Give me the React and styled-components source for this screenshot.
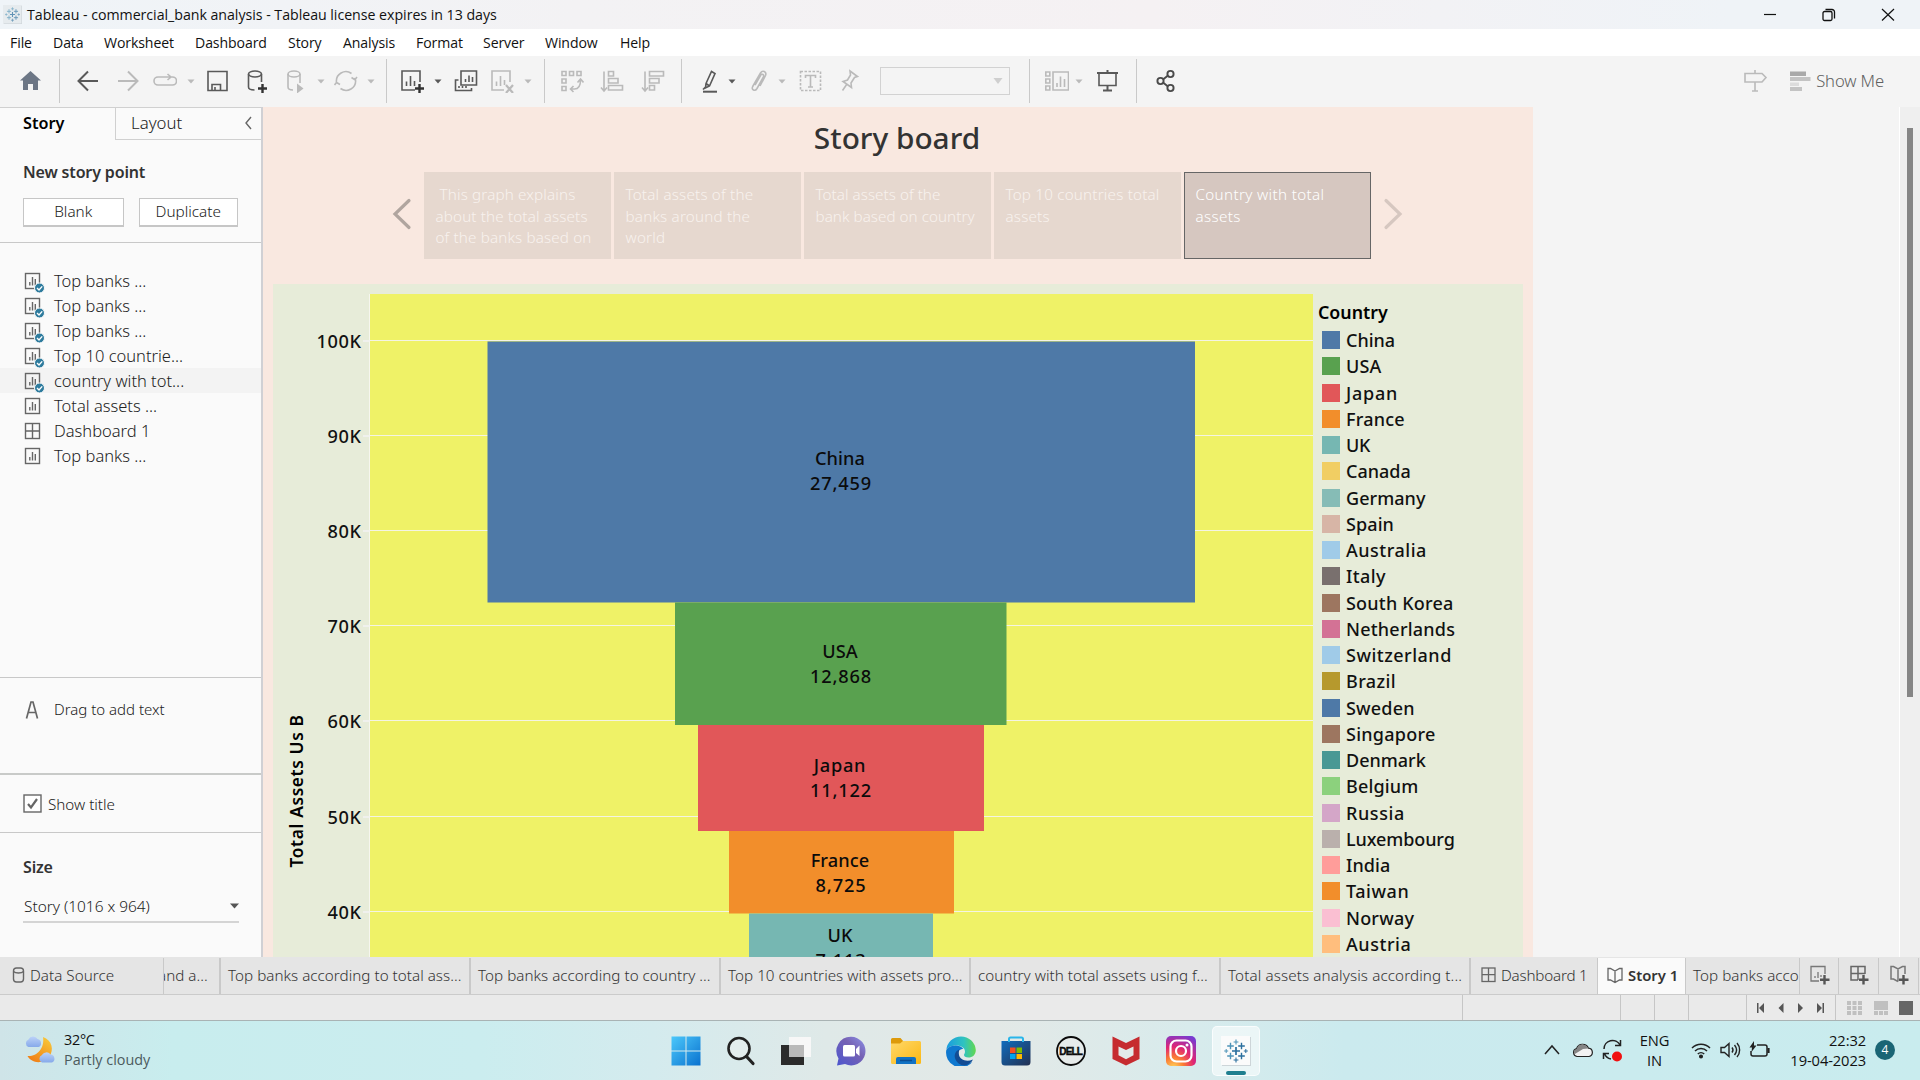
import React from "react";
import styled, { createGlobalStyle, css } from "styled-components";

const ui = `"Noto Sans", "Open Sans", sans-serif`;
const win = `"Open Sans", "Noto Sans", sans-serif`;

const Global = createGlobalStyle`
  * { box-sizing: border-box; }
  body { margin: 0; background: #f4f4f4; overflow: hidden; }
`;

const Screen = styled.div`
  width: 1920px;
  height: 1080px;
  display: flex;
  flex-direction: column;
  overflow: hidden;
  background: #f4f4f4;
  font-family: ${ui};
  color: #333;
  white-space: nowrap;
`;

const TitleBar = styled.header`
  height: 29px;
  flex: none;
  display: flex;
  align-items: center;
  padding: 0 25px 0 3px;
  background: linear-gradient(90deg, #eff4f8 0%, #f3f2f4 30%, #f5f1f3 60%, #eff3f7 90%);
  font: 400 14.2px/29px ${win};
  letter-spacing: -0.03px;
  color: #111;
`;
const AppTitle = styled.span`
  margin-left: 5px;
  flex: 1;
`;
const WindowButtons = styled.div`
  display: flex;
  gap: 39px;
  margin-right: -3px;
`;

const MenuBar = styled.nav`
  height: 27px;
  flex: none;
  display: flex;
  padding-left: 10px;
  background: #fff;
  font: 400 14.1px/27px ${win};
  letter-spacing: -0.1px;
  color: #111;
`;
const MenuItem = styled.span`
  width: ${(p) => p.$w}px;
`;

const Toolbar = styled.div`
  height: 51px;
  flex: none;
  display: flex;
  align-items: center;
  padding-bottom: 1px;
  background: #f4f4f4;
`;
const Tool = styled.span`
  flex: none;
  display: block;
  width: ${(p) => p.$w || 24}px;
  height: 24px;
  margin-left: ${(p) => p.$gap}px;
  svg { display: block; }
`;
const Divider = styled.i`
  flex: none;
  width: 1px;
  height: 44px;
  margin-left: ${(p) => p.$gap}px;
  background: #c9c9c9;
`;
const FitBox = styled.div`
  flex: none;
  width: 130px;
  height: 28px;
  margin-left: 18px;
  border: 1px solid #d2d2d2;
  display: flex;
  align-items: center;
  justify-content: flex-end;
  padding-right: 6px;
`;
const ShowMe = styled.div`
  margin-left: auto;
  display: flex;
  align-items: center;
  padding: 0 36px 1px 0;
  font-size: 16.6px;
  font-weight: 300;
  letter-spacing: -0.1px;
  color: #606060;
`;

const Main = styled.main`
  height: 850px;
  flex: none;
  display: flex;
`;

const Side = styled.aside`
  width: 263px;
  flex: none;
  display: flex;
  flex-direction: column;
  background: #fafafa;
  border-right: 2px solid #d0d0d4;
  font-size: 15px;
`;
const SideTabs = styled.div`
  height: 33px;
  flex: none;
  display: flex;
  border-top: 1px solid #d0d0d0;
`;
const SideTab = styled.div`
  width: ${(p) => p.$w}px;
  line-height: 30px;
  ${(p) =>
    p.$active
      ? css`
          padding-left: 23px;
          font-size: 16.2px;
          font-weight: 600;
          color: #000;
        `
      : css`
          padding: 0 9px 2px 15px;
          font-size: 16.8px;
          font-weight: 300;
          color: #222;
          border-left: 1px solid #d0d0d0;
          border-bottom: 1px solid #d0d0d0;
          display: flex;
          align-items: center;
          justify-content: space-between;
        `}
`;
const NewPoint = styled.section`
  height: 103px;
  flex: none;
  padding: 22px 23px 0;
  border-bottom: 1px solid #c8c8c8;
`;
const SideHeading = styled.h3`
  margin: 0;
  font-size: 16px;
  font-weight: 600;
  line-height: 20px;
  letter-spacing: -0.15px;
`;
const Buttons = styled.div`
  display: flex;
  gap: 15px;
  margin-top: 16px;
`;
const Button = styled.button`
  width: ${(p) => p.$w}px;
  height: 29px;
  padding: 0 0 2px;
  border: 1px solid #c6c6c6;
  border-bottom-width: 2px;
  background: #fff;
  font: 300 15.3px/24px ${ui};
  color: #222;
`;
const SheetList = styled.ul`
  margin: 0;
  padding: 25px 0 0;
  height: 435px;
  flex: none;
  list-style: none;
  border-bottom: 1px solid #c8c8c8;
`;
const SheetRow = styled.li`
  height: 25px;
  display: flex;
  align-items: center;
  padding: 0 0 0 24px;
  gap: 8px;
  font-size: 16.5px;
  font-weight: 300;
  line-height: 25px;
  color: #222;
  background: ${(p) => (p.$on ? "#f3f3f3" : "transparent")};
`;
const DragText = styled.section`
  height: 97px;
  flex: none;
  display: flex;
  align-items: flex-start;
  padding: 22px 0 0 25px;
  gap: 15px;
  font-size: 15px;
  font-weight: 300;
  line-height: 18px;
  color: #222;
  border-bottom: 2px solid #c8cac8;
`;
const TitleToggle = styled.section`
  height: 58px;
  flex: none;
  display: flex;
  align-items: center;
  gap: 6px;
  padding-left: 23px;
  border-bottom: 1px solid #c8c8c8;
  font-size: 15.2px;
  font-weight: 300;
  color: #222;
`;
const SizeBox = styled.section`
  flex: 1;
  padding: 24px 22px 0 23px;
`;
const SizeSelect = styled.div`
  display: flex;
  justify-content: space-between;
  align-items: center;
  height: 30px;
  margin-top: 16px;
  padding: 0 0 2px 1px;
  font-size: 15.4px;
  font-weight: 300;
  color: #222;
  border-bottom: 2px solid #d4d4d4;
`;

const StoryArea = styled.section`
  width: 1270px;
  flex: none;
  background: #f9e8e0;
  overflow: hidden;
`;
const StoryTitle = styled.h1`
  margin: 0;
  padding: 12px 2px 0 0;
  height: 65px;
  text-align: center;
  font-size: 29.8px;
  line-height: 38px;
  font-weight: 500;
  color: #333;
`;
const Navigator = styled.div`
  display: flex;
  align-items: center;
  justify-content: center;
  height: 87px;
  padding-right: 2px;
  > svg { margin-bottom: 3px; }
`;
const Points = styled.div`
  display: flex;
  gap: 3px;
  margin: 0 12px;
`;
const Point = styled.div`
  width: 187px;
  height: 87px;
  background: ${(p) => (p.$on ? "#d6c7c0" : "#e6d8cf")};
  border: ${(p) => (p.$on ? "1px solid #666" : "0")};
  padding: ${(p) => (p.$on ? "11px 0 0 11px" : "12px 0 0 12px")};
  font-size: 15.2px;
  font-weight: 300;
  letter-spacing: ${(p) => p.$ls ?? 0}px;
  line-height: 21.5px;
  white-space: pre;
  color: ${(p) => (p.$on ? "#fff" : "#f8f2ee")};
`;
const Board = styled.div`
  display: flex;
  width: 1250px;
  height: 673px;
  margin: 25px 0 0 10px;
  background: #e7ecd9;
`;
const Legend = styled.div`
  padding: 17px 0 0 5px;
  font-size: 18px;
  font-weight: 500;
  color: #111;
`;
const LegendTitle = styled.div`
  height: 26px;
  font-size: 17.8px;
  line-height: 22px;
  font-weight: 600;
  color: #000;
`;
const LegendRow = styled.div`
  height: 26.26px;
  display: flex;
  align-items: center;
  gap: 6px;
  padding-left: 4px;
  letter-spacing: ${(p) => p.$ls ?? 0}px;
`;
const Swatch = styled.i`
  width: 18px;
  height: 18px;
  background: ${(p) => p.$c};
`;
const Canvas = styled.div`
  flex: 1;
  display: flex;
  justify-content: flex-end;
`;
const ScrollTrack = styled.div`
  width: 21px;
  background: #efefef;
  border-left: 1px solid #fff;
  padding: 21px 0 0 7px;
`;
const ScrollThumb = styled.div`
  width: 6px;
  height: 569px;
  background: #868686;
`;

const SheetTabs = styled.div`
  height: 38px;
  flex: none;
  display: flex;
  padding-top: 1px;
  background: #e5e5e5;
  border-bottom: 1px solid #cbcbcb;
  color: #333;
`;
const SheetTab = styled.div`
  width: ${(p) => p.$w}px;
  flex: none;
  height: 36px;
  overflow: hidden;
  display: flex;
  align-items: center;
  gap: 5px;
  padding: 0 0 2px ${(p) => p.$pl ?? 7}px;
  border-right: ${(p) => p.$br ?? 2}px solid #c9c9c9;
  font-size: 15.2px;
  font-weight: 300;
  letter-spacing: ${(p) => p.$ls ?? 0.03}px;
  text-indent: ${(p) => p.$indent ?? 0}px;
  ${(p) =>
    p.$on &&
    css`
      background: #fafafa;
      font-size: 14.8px;
      font-weight: 600;
      color: #333;
    `}
  svg { flex: none; }
`;
const StatusBar = styled.div`
  height: 26px;
  flex: none;
  display: flex;
  background: #eaeaea;
  border-bottom: 1px solid #a9b3b4;
`;
const StatusCell = styled.div`
  width: ${(p) => p.$w}px;
  flex: none;
  display: flex;
  align-items: center;
  justify-content: space-between;
  padding: 0 ${(p) => p.$pr ?? 0}px 0 ${(p) => p.$pl ?? 0}px;
  border-right: 1px solid #c6c6c6;
  &:last-child { border-right: 0; }
`;

const Taskbar = styled.footer`
  height: 59px;
  flex: none;
  display: flex;
  align-items: center;
  background: linear-gradient(90deg, #cfe4e8 0%, #c8edee 9%, #cbedef 25%, #d4ebee 34%, #dfe9e8 43%, #e3e9e7 52%, #d8ebec 62%, #cbeaee 70%, #c9ecee 100%);
  font-family: ${win};
`;
const Weather = styled.div`
  width: 662px;
  flex: none;
  display: flex;
  align-items: center;
  gap: 8px;
  padding: 0 0 2px 24px;
  font-size: 14.4px;
  line-height: 20px;
  letter-spacing: -0.25px;
  color: #111;
  small { display: block; font-size: 14.4px; letter-spacing: 0; color: #4c5b5e; }
`;
const Dock = styled.div`
  display: flex;
  gap: 7px;
`;
const DockItem = styled.div`
  width: 48px;
  height: 50px;
  display: flex;
  flex-direction: column;
  align-items: center;
  justify-content: center;
  border-radius: 5px;
  background: ${(p) => (p.$on ? "rgba(255,255,255,.55)" : "transparent")};
  border: 1px solid ${(p) => (p.$on ? "rgba(255,255,255,.7)" : "transparent")};
`;
const RunMark = styled.i`
  width: 20px;
  height: 4px;
  margin: 5px 0 -9px;
  border-radius: 2px;
  background: #1f7f8f;
`;
const Tray = styled.div`
  margin-left: auto;
  display: flex;
  align-items: center;
  padding: 0 25px 2px 0;
  font-size: 14.7px;
  line-height: 20px;
  letter-spacing: -0.1px;
  color: #111;
`;
const TrayItem = styled.div`
  margin-left: ${(p) => p.$gap}px;
  text-align: ${(p) => p.$align || "center"};
  svg { display: block; }
`;
const Badge = styled.span`
  width: 20px;
  height: 20px;
  margin-left: 9px;
  border-radius: 50%;
  background: #1a6575;
  color: #fff;
  font-size: 12px;
  text-align: center;
`;

const Svg = ({ w = 24, h = 24, vb, c = "#555", sw = 1.6, children }) => (
  <svg width={w} height={h} viewBox={vb || `0 0 ${w} ${h}`} fill="none" stroke={c} strokeWidth={sw}>
    {children}
  </svg>
);
const GREY = "#bababa";
const DARK = "#595959";

const Caret = ({ gap, c = GREY }) => (
  <Tool $gap={gap} $w={8}>
    <Svg w={8} c="none"><path d="M0.5 10.5h7L4 14.5z" fill={c} /></Svg>
  </Tool>
);
const T = ({ gap, c = DARK, sw, children }) => (
  <Tool $gap={gap}><Svg c={c} sw={sw}>{children}</Svg></Tool>
);

const TABLEAU = [
  [12, 12, 4, 1.7], [12, 3, 2.4, 1.1], [12, 21, 2.4, 1.1], [6.5, 7, 3.3, 1.4], [17.5, 7, 3.3, 1.4],
  [6.5, 17, 3.3, 1.4], [17.5, 17, 3.3, 1.4], [2.2, 12, 2, 1], [21.8, 12, 2, 1],
];
const Tableau = ({ size, box, soft }) => (
  <svg width={size} height={size} viewBox="-3 -3 30 30">
    <rect x="-2" y="-2" width="29" height="29" fill="#b9c0c4" opacity=".6" />
    <rect x="-3" y="-3" width="29" height="29" fill={box} />
    <g opacity={soft ? 0.7 : 1}>
      {TABLEAU.map(([x, y, r, w], i) => (
        <path key={i} d={`M${x - r} ${y}h${2 * r}M${x} ${y - r}v${2 * r}`} stroke={i % 2 ? "#4f94b8" : "#2b6f9e"} strokeWidth={w} />
      ))}
    </g>
  </svg>
);

const SheetIcon = ({ checked, dash }) => (
  <Svg w={22} h={24} c="#666" sw={1.4}>
    <rect x="1.5" y="4.500" width="14" height="15" />
    {dash ? <path d="M8.5 4.5v15M1.5 12h14" /> : <path d="M5.8 16.500v-3.5M8.5 16.500V8M11.3 16.500V10" />}
    {checked && (
      <g>
        <circle cx="15.5" cy="19" r="5" fill="#2f7c9e" stroke="#fafafa" strokeWidth="1" />
        <path d="M13 19l2 2 3.2-3.6" stroke="#fff" />
      </g>
    )}
  </Svg>
);

const SHEETS = [
  ["Top banks ...", "c"], ["Top banks ...", "c"], ["Top banks ...", "c"], ["Top 10 countrie...", "c"],
  ["country with tot...", "c"], ["Total assets ...", ""], ["Dashboard 1", "d"], ["Top banks ...", ""],
];

const POINTS = [
  [" This graph explains\nabout the total assets\nof the banks based on", 0.15],
  ["Total assets of the\nbanks around the\nworld", 0.2],
  ["Total assets of the\nbank based on country", 0.05],
  ["Top 10 countries total\nassets", 0.2],
  ["Country with total\nassets", 0.35],
];

const LEGEND = [
  ["China", "#4e79a7", 0], ["USA", "#59a14f", 0.2], ["Japan", "#e15759", 0.75], ["France", "#f28e2b", 0.2], ["UK", "#76b7b2", -0.2],
  ["Canada", "#f1ce63", 0], ["Germany", "#86bcb6", 0.05], ["Spain", "#d7b5a6", 0.1], ["Australia", "#a0cbe8", 0.5], ["Italy", "#79706e", 0.4],
  ["South Korea", "#9d7660", 0.2], ["Netherlands", "#d37295", 0.22], ["Switzerland", "#a0cbe8", 0.5], ["Brazil", "#b6992d", 0.4],
  ["Sweden", "#4e79a7", 0.2], ["Singapore", "#9d7660", 0.25], ["Denmark", "#499894", 0], ["Belgium", "#8cd17d", 0.15], ["Russia", "#d4a6c8", 0.6],
  ["Luxembourg", "#bab0ac", -0.1], ["India", "#ff9d9a", 0.1], ["Taiwan", "#f28e2b", 0.55], ["Norway", "#fabfd2", 0.2], ["Austria", "#ffbe7d", 0.55],
];

const BARS = [
  ["China", "27,459", 487.5, 1195, 341.5, 602.5, "#4e79a7", 459],
  ["USA", "12,868", 675, 1006.5, 602.5, 725, "#59a14f", 652],
  ["Japan", "11,122", 698, 984, 725, 831, "#e15759", 766],
  ["France", "8,725", 729, 954, 831, 913.5, "#f28e2b", 861],
  ["UK", "7,113", 749, 933, 913.5, 960, "#76b7b2", 936],
];

const Axis = styled.text`
  font: 500 18.2px ${ui};
  letter-spacing: 0.6px;
  fill: #111;
  text-anchor: end;
`;
const Mark = styled.text`
  font: 500 18.2px ${ui};
  letter-spacing: ${(p) => p.$ls}px;
  fill: #0b0b0b;
  text-anchor: middle;
`;
const AxisTitle = styled.text`
  font: 600 17.4px ${ui};
  letter-spacing: 0.6px;
  fill: #000;
  text-anchor: middle;
`;

const Chart = () => (
  <svg width="1040" height="673" viewBox="273 284 1040 673">
    <rect x="370" y="294" width="943" height="663" fill="#eff267" />
    <path d="M369.5 294V957" stroke="#f6f6ee" />
    {[340.5, 435.5, 530.5, 625.5, 720.5, 816.5, 911.5].map((y, i) => (
      <g key={y}>
        <path d={`M363 ${y + 0.5}H370`} stroke="#f3f3f3" strokeWidth="1.6" />
        <path d={`M370 ${y}H1313`} stroke="#f4f4e4" strokeWidth="1.2" />
        <Axis x="361.500" y={y + 7.5}>{100 - i * 10}K</Axis>
      </g>
    ))}
    {BARS.map(([n, v, x1, x2, y1, y2, c, ty]) => (
      <g key={n}>
        <rect x={x1} y={y1} width={x2 - x1} height={y2 - y1} fill={c} />
        <Mark x="840" y={ty + 6} $ls={n === "Japan" ? 0.7 : 0.1}>{n}</Mark>
        <Mark x="841" y={ty + 31} $ls={0.85}>{v}</Mark>
      </g>
    ))}
    <AxisTitle transform="translate(303 791) rotate(-90)">Total Assets Us B</AxisTitle>
  </svg>
);

const TabDash = () => (
  <Svg w={15} h={18} c="#666" sw={1.3}><rect x="1" y="2" width="13" height="13.5" /><path d="M7.5 2v13.5M1 8.7h13" /></Svg>
);
const TabStory = () => (
  <Svg w={16} h={18} c="#666" sw={1.3}><path d="M1 2.500h2.500l4.500 2.500 4.500-2.500H15v11.500h-2.500L8 16.500 3.500 14H1zM8 5v11.500" /></Svg>
);
const Plus = () => <path d="M17.5 12v9.500M13 16.700h9.500" stroke="#555" strokeWidth="2.4" />;

const DockIcons = [
  <svg width="30" height="30" viewBox="0 0 30 30"><defs><linearGradient id="wn" x1="0" y1="0" x2="1" y2="1"><stop offset="0" stopColor="#4cc8fb" /><stop offset="1" stopColor="#0a72cf" /></linearGradient></defs><path d="M.5 .5h14v14h-14zM15.500 .5h14v14h-14zM.5 15.500h14v14h-14zM15.500 15.500h14v14h-14z" fill="url(#wn)" /></svg>,
  <svg width="30" height="30" viewBox="0 0 30 30" fill="none" stroke="#222"><circle cx="13" cy="12.500" r="10.500" strokeWidth="2.600" fill="#e9eeee" fillOpacity=".6" /><path d="M20.500 20.500l6.500 7" strokeWidth="3.200" strokeLinecap="round" /></svg>,
  <svg width="30" height="30" viewBox="0 0 30 30"><rect x="0" y="9" width="23" height="20" fill="#2b2b2b" /><rect x="8" y="1" width="22" height="20" fill="#f7f7f7" /><rect x="8" y="9" width="15" height="12" fill="#b9b9b9" /></svg>,
  <svg width="30" height="30" viewBox="0 0 30 30"><defs><linearGradient id="ct" x1="1" y1="0" x2="0" y2="1"><stop offset="0" stopColor="#8d93ea" /><stop offset=".4" stopColor="#7662b4" /><stop offset="1" stopColor="#4b55cf" /></linearGradient></defs><path d="M15 .8a14.300 14.300 0 1 1-6 27.200L1 29.500l1.500-7A14.300 14.300 0 0 1 15 .8z" fill="url(#ct)" /><rect x="7" y="9" width="12" height="11.500" rx="1.500" fill="#fff" /><path d="M20 13l3.500-3.500v10.500L20 17z" fill="#fff" /></svg>,
  <svg width="30" height="30" viewBox="0 0 30 30"><defs><linearGradient id="fo" x1="0" y1="0" x2="1" y2="1"><stop offset="0" stopColor="#ffd86a" /><stop offset="1" stopColor="#fbb813" /></linearGradient></defs><path d="M0 3.500a1.500 1.500 0 0 1 1.500-1.500h8l3 3.500H12v5H0z" fill="#dd9a0b" /><path d="M0 7.500h9l3-2.500h16.500A1.500 1.500 0 0 1 30 6.500v20a1.500 1.500 0 0 1-1.500 1.500h-27A1.500 1.500 0 0 1 0 26.500z" fill="url(#fo)" /><path d="M5 28V23a2 2 0 0 1 2-2h16a2 2 0 0 1 2 2v5z" fill="#1172c4" /><path d="M9 24.500h12" stroke="#0b4d92" strokeWidth="1.500" /></svg>,
  <svg width="30" height="30" viewBox="0 0 30 30"><defs><linearGradient id="ed" x1="0" y1=".3" x2="1" y2=".3"><stop offset="0" stopColor="#1a9be0" /><stop offset=".6" stopColor="#2fc3c0" /><stop offset="1" stopColor="#62d84e" /></linearGradient></defs><path d="M.3 14A14.800 14.800 0 0 1 29.800 14c0 5-3.500 7.500-7.300 7.500-3 0-4.500-1.200-4.500-2.500 0-1 1-1.500 1-3.500C19 12 15 9.500 10.500 9.500 5.500 9.500 1.500 11.500.3 14z" fill="url(#ed)" /><path d="M.3 14c1.500-3 5-4.500 9.500-4.500 3.500 0 6 1.500 7.500 3.500-4 0-7 3-6 8 .8 4 5 6.500 9.500 6.500 2.500 0 4-.6 5.500-1.500A14.800 14.800 0 0 1 .3 14z" fill="#0f78cf" /><path d="M13.500 13.500c-3.500 1-5.500 4.500-4.500 8.500 1 4.500 5.500 7.500 9.500 7.500 3.500-.5 7-3 8.500-6-7 3-13 0-14-4.500-.5-2.500 0-4.500.5-5.500z" fill="#124c94" /></svg>,
  <svg width="30" height="30" viewBox="0 0 30 30"><defs><linearGradient id="st" x1="0" y1="0" x2="1" y2="1"><stop offset="0" stopColor="#0f6cbd" /><stop offset="1" stopColor="#243152" /></linearGradient></defs><path d="M.5 5h29v21a3.500 3.500 0 0 1-3.500 3.500H4A3.500 3.500 0 0 1 .5 26z" fill="url(#st)" /><path d="M8 6V3a1.500 1.500 0 0 1 1.500-1.500h11A1.500 1.500 0 0 1 22 3v3" fill="none" stroke="#29b6ea" strokeWidth="2" /><path d="M9 11.500h5.500V17H9z" fill="#f25022" /><path d="M15.500 11.500H21V17h-5.500z" fill="#7fba00" /><path d="M9 18h5.500v5H9z" fill="#00a4ef" /><path d="M15.500 18H21v5h-5.500z" fill="#ffb900" /></svg>,
  <svg width="30" height="30" viewBox="0 0 30 30"><circle cx="15" cy="15" r="14" fill="#e6ebea" stroke="#0a0a0a" strokeWidth="1.800" /><text x="14.600" y="18.600" textAnchor="middle" fontFamily="Liberation Sans, sans-serif" fontSize="10" fontWeight="700" letterSpacing="-.9" stroke="#0a0a0a" strokeWidth=".4" fill="#0a0a0a">DELL</text></svg>,
  <svg width="30" height="30" viewBox="0 0 30 30"><path d="M1.500 0.500l13.500 6.500 13.500-6.500v22.500L15 29.500 1.500 23z" fill="#c62b2f" /><path d="M7.500 10.500v8.700l7.500 4 7.500-4v-8.700L15 14z" fill="#e3e9e8" /></svg>,
  <svg width="30" height="30" viewBox="0 0 30 30"><defs><radialGradient id="ig" cx=".25" cy="1.050" r="1.150"><stop offset="0" stopColor="#ffd35a" /><stop offset=".3" stopColor="#fb7b34" /><stop offset=".6" stopColor="#e02574" /><stop offset="1" stopColor="#7a3ad0" /></radialGradient></defs><rect width="30" height="30" rx="5" fill="url(#ig)" /><g fill="none" stroke="#fff" strokeWidth="2.200"><rect x="4.500" y="4.500" width="21" height="21" rx="6" /><circle cx="15" cy="15" r="5" /></g><circle cx="21" cy="9" r="1.500" fill="#fff" /></svg>,
];

export default function App() {
  return (
    <Screen>
      <Global />
      <TitleBar>
        <Tableau size={19} box="#e6ebee" soft />
        <AppTitle>Tableau - commercial_bank analysis - Tableau license expires in 13 days</AppTitle>
        <WindowButtons>
          <Svg w={20} h={20} c="#111" sw={1.2}><path d="M4 9.500h12" /></Svg>
          <Svg w={20} h={20} c="#111" sw={1.3}><rect x="4" y="6.500" width="9" height="9" rx="1.500" /><path d="M6.500 4.500h6.500a2.500 2.500 0 0 1 2.500 2.500v6.500" /></Svg>
          <Svg w={20} h={20} c="#111" sw={1.2}><path d="M4 4l12 11.500M16 4L4 15.500" /></Svg>
        </WindowButtons>
      </TitleBar>

      <MenuBar>
        {[["File", 43], ["Data", 51], ["Worksheet", 91], ["Dashboard", 93], ["Story", 55], ["Analysis", 73], ["Format", 67], ["Server", 62], ["Window", 75], ["Help", 50]].map(([n, w]) => (
          <MenuItem key={n} $w={w}>{n}</MenuItem>
        ))}
      </MenuBar>

      <Toolbar>
        <T gap={18} c="none"><path d="M12.500 2L2 11.500h3V21h5v-6h5v6h5v-9.500h3z" fill="#6c7685" /></T>
        <Divider $gap={17} />
        <T gap={16} sw={2}><path d="M22 12H2.500M12 2.500L2.500 12l9.500 9.500" /></T>
        <T gap={16} c={GREY} sw={2}><path d="M2 12h19.500M12 2.500l9.500 9.500-9.500 9.500" /></T>
        <T gap={13} c={GREY}><path d="M17 8h2.500a4 4 0 0 1 0 8H5a4 4 0 0 1 0-8h12M14.500 5l3.500 3-3.500 3" /></T>
        <Caret gap={10} />
        <T gap={11}><path d="M2 2.500h19v19H2zM6 21v-5.500h8.500V21M9 21v-3" /></T>
        <T gap={15}><ellipse cx="10" cy="5" rx="6.500" ry="3" /><path d="M3.500 5v13c0 2 2 3 6 3M16.500 5v8" /><path d="M17.500 15v9M13 19.500h9" stroke="#333" strokeWidth="2.400" /></T>
        <T gap={15} c={GREY}><ellipse cx="10" cy="5" rx="6" ry="3" /><path d="M4 5v13c0 2 2 3 5 3M16 5v9" /><path d="M13 14.500l6.500 5-6.500 5z" fill={GREY} stroke="none" /></T>
        <Caret gap={9} />
        <T gap={9} c={GREY}><path d="M2.500 13.500A9.500 9.500 0 0 1 17.500 4.500M21.500 10.500A9.500 9.500 0 0 1 6.500 19.500M21 9l-.5 1.500-3-2M21 10.500l2-2.500M2.500 13.500l-2 2.500M2.500 13.500l3.500 2" /></T>
        <Caret gap={9} />
        <Divider $gap={11} />
        <T gap={13}><path d="M20 13V2H2v19h13M6.500 17v-4.500M10.500 17V7M14.500 17v-5" /><path d="M19.500 15v9M15 19.500h9" stroke="#333" strokeWidth="2.400" /></T>
        <Caret gap={10} c={DARK} />
        <T gap={12}><path d="M7 2h15.500v14H7zM11.500 13v-3M15 13V6.500M18.500 13V8M4.500 11H1.500v10.500h16V19M5 19v-2M8.500 19v-2M12 19v-2" /></T>
        <T gap={12} c={GREY}><path d="M20 13V2H2v19h12M6.500 17v-4.500M10.500 17V7M14.500 16v-5" /><path d="M16 16l7 8M23 16l-7 8" strokeWidth="2.200" /></T>
        <Caret gap={10} />
        <Divider $gap={12} />
        <T gap={15} c={GREY}><path d="M2 2.500h4v4H2zM9.500 2.500h4v4h-4zM17 2.500h4v4h-4zM2 10h4v4H2zM2 17.500h4v4H2zM10.500 20h4c4 0 6-3 6-9M17.500 13.500l3-3.500 3 3.500M13.500 17l-3 3 3 3" /></T>
        <T gap={16} c={GREY}><path d="M4 2.500v19M1 18.500l3 3.500 3-3.500M8.500 2.500h5v4.500h-5zM8.500 9.500h9.500V14H8.500zM8.500 16.500h14V21h-14z" /></T>
        <T gap={17} c={GREY}><path d="M4 2.500v19M1 18.500l3 3.500 3-3.500M8.500 2.500h14V7h-14zM8.500 9.500h9.500V14H8.500zM8.500 16.500h5V21h-5z" /></T>
        <Divider $gap={16} />
        <T gap={17}><path d="M7 14.500L12.500 2.500l3.500 2L10.500 17 6.500 19zM7 14.500l3.500 2.500M4 20.500l2.500-2.500" /><path d="M4 22.700h14" strokeWidth="2" /></T>
        <Caret gap={5} c={DARK} />
        <T gap={11} c={GREY}><path d="M8 16l5.500-9.500c1.500-2.500 4-.8 2.800 1.700L10 19.500c-2 3.300-6 1.300-4.300-2L13.500 4c2-3.300 6.500-1.500 5 2.500L13 17" /></T>
        <Caret gap={7} />
        <T gap={12} c={GREY}><rect x="2.500" y="2.500" width="20" height="19" strokeDasharray="2.500 1.500" /><path d="M7.500 9V6.500h10V9M12.500 6.500v11.500M10 18h5" /></T>
        <T gap={16} c={GREY}><path d="M12 2l7.500 5.500-3 1-3.500 5.500.5 4.500-8.500-6 4.500-1.500 3-5zM9 15L4.500 21.500" /></T>
        <FitBox><Svg w={10} h={8} c="none"><path d="M0.500 1h9L5 7z" fill="#cfcfcf" /></Svg></FitBox>
        <Divider $gap={19} />
        <T gap={15} c={GREY}><path d="M.8 3h4v4h-4zM.8 10h4v4h-4zM.8 17h4v4h-4zM8 3h15.500v18H8zM12 18v-4M15.500 18V7.500M19.500 18v-8" /></T>
        <Caret gap={6} />
        <T gap={13}><path d="M1 4h21M11.500 1v3M11.500 16.500V22M7 21.500h9" strokeWidth="2" /><path d="M3 4v12.500h17V4" /></T>
        <Divider $gap={16} />
        <T gap={17} c="#4a4a4a" sw={1.9}><circle cx="6.500" cy="12" r="3.100" /><circle cx="16.500" cy="5" r="3.100" /><circle cx="16.500" cy="19" r="3.100" /><path d="M9 10.500l5-4M9 13.500l5 4" /></T>
        <ShowMe>
          <Svg c={GREY} w={45}><path d="M2 4.500h17l4 4-4 4.500H2zM12 1v3.500M12 13v9M9 22h6" /></Svg>
          <Svg c="none" w={28}><path d="M2 2.500h16V7H2z" fill="#a9a9a9" /><path d="M2 8h20.500v4H2zM2 18h12v4H2z" fill="#c3c3c3" /><path d="M2 13.500h9V17H2z" fill="#dcdcdc" /></Svg>
          Show Me
        </ShowMe>
      </Toolbar>

      <Main>
        <Side>
          <SideTabs>
            <SideTab $w={115} $active>Story</SideTab>
            <SideTab $w={146}>
              Layout
              <Svg w={8} h={14} c="#666" sw={1.400}><path d="M7 1L2 7l5 6" /></Svg>
            </SideTab>
          </SideTabs>
          <NewPoint>
            <SideHeading>New story point</SideHeading>
            <Buttons><Button $w={101}>Blank</Button><Button $w={100}>Duplicate</Button></Buttons>
          </NewPoint>
          <SheetList>
            {SHEETS.map(([n, k], i) => (
              <SheetRow key={i} $on={i === 4}>
                <SheetIcon checked={k === "c"} dash={k === "d"} />
                <span>{n}</span>
              </SheetRow>
            ))}
          </SheetList>
          <DragText>
            <Svg w={14} h={20} c="#666" sw={1.700}><path d="M1.500 18.500L6 2h2l4.500 16.500M3 12.500h8" /></Svg>
            Drag to add text
          </DragText>
          <TitleToggle>
            <Svg w={19} h={20} c="#666" sw={1.400}><rect x="1" y="1" width="17" height="17" fill="#fff" /><path d="M5 10l3 3.500 6-8.500" strokeWidth="2.200" /></Svg>
            Show title
          </TitleToggle>
          <SizeBox>
            <SideHeading>Size</SideHeading>
            <SizeSelect>
              Story (1016 x 964)
              <Svg w={9} h={6} c="none"><path d="M0 .5h9L4.500 5.500z" fill="#555" /></Svg>
            </SizeSelect>
          </SizeBox>
        </Side>

        <StoryArea>
          <StoryTitle>Story board</StoryTitle>
          <Navigator>
            <Svg w={20} h={32} c="#b0a59f" sw={3.200}><path d="M17 2.500L3 16l14 13.500" strokeLinecap="round" /></Svg>
            <Points>
              {POINTS.map(([t, ls], i) => <Point key={i} $on={i === 4} $ls={ls}>{t}</Point>)}
            </Points>
            <Svg w={20} h={32} c="#d6c7c0" sw={3.200}><path d="M3 2.500L17 16 3 29.500" strokeLinecap="round" /></Svg>
          </Navigator>
          <Board>
            <Chart />
            <Legend>
              <LegendTitle>Country</LegendTitle>
              {LEGEND.map(([n, c, ls]) => (
                <LegendRow key={n} $ls={ls}><Swatch $c={c} />{n}</LegendRow>
              ))}
            </Legend>
          </Board>
        </StoryArea>

        <Canvas>
          <ScrollTrack><ScrollThumb /></ScrollTrack>
        </Canvas>
      </Main>

      <SheetTabs>
        <SheetTab $w={164} $pl={12} $br={1}>
          <Svg w={13} h={18} c="#666" sw={1.400}><rect x="1.500" y="2" width="10" height="14" rx="3" /><path d="M1.500 5.500c2 2 8 2 10 0" /></Svg>
          Data Source
        </SheetTab>
        <SheetTab $w={57} $pl={0} $indent={-6}>and a...</SheetTab>
        <SheetTab $w={250}>Top banks according to total ass...</SheetTab>
        <SheetTab $w={250}>Top banks according to country ...</SheetTab>
        <SheetTab $w={250}>Top 10 countries with assets pro...</SheetTab>
        <SheetTab $w={250}>country with total assets using f...</SheetTab>
        <SheetTab $w={250} $ls={0.12}>Total assets analysis according t...</SheetTab>
        <SheetTab $w={127} $pl={10} $br={1} $ls={-0.2}><TabDash />Dashboard 1</SheetTab>
        <SheetTab $w={88} $pl={9} $br={1} $on><TabStory />Story 1</SheetTab>
        <SheetTab $w={114} $br={1}>Top banks according</SheetTab>
        <SheetTab $w={39} $br={1}><Svg c="#777" sw={1.300}><path d="M18 11V3.500H4V18h8M8 15v-2M11 15V9M14 14v-2" /><Plus /></Svg></SheetTab>
        <SheetTab $w={40} $br={1}><Svg c="#666" sw={1.500}><path d="M19 11V3.500H5V17h7M12 3.500V17M5 10.500h14" /><Plus /></Svg></SheetTab>
        <SheetTab $w={40} $br={1}><Svg c="#777" sw={1.500}><path d="M19 11V3.500h-2.500L12 6 7.500 3.500H5V16h2.500l4.500 2.500M12 6v12.500" /><Plus /></Svg></SheetTab>
      </SheetTabs>

      <StatusBar>
        <StatusCell $w={1463} /><StatusCell $w={158} /><StatusCell $w={34} /><StatusCell $w={34} /><StatusCell $w={58} />
        <StatusCell $w={89} $pl={10} $pr={11}>
          <Svg w={8} h={12} c="none"><path d="M0 1h1.500v10H0zM7 1v10L2 6z" fill="#555" /></Svg>
          <Svg w={8} h={12} c="none"><path d="M6.500 1v10l-5-5z" fill="#555" /></Svg>
          <Svg w={8} h={12} c="none"><path d="M2 1v10l5-5z" fill="#555" /></Svg>
          <Svg w={8} h={12} c="none"><path d="M6.500 1H8v10H6.500zM1 1v10l5-5z" fill="#555" /></Svg>
        </StatusCell>
        <StatusCell $w={84} $pl={11} $pr={7}>
          <Svg w={15} h={14} c="none"><path d="M0 0h4v4H0zM5.500 0h4v4h-4zM11 0h4v4h-4zM0 5h4v4H0zM5.500 5h4v4h-4zM11 5h4v4h-4zM0 10h4v4H0zM5.500 10h4v4h-4zM11 10h4v4h-4z" fill="#c0c0c0" /></Svg>
          <Svg w={14} h={14} c="none"><path d="M0 0h14v9H0zM0 10h4v4H0zM5 10h4v4H5zM10 10h4v4h-4z" fill="#c0c0c0" /></Svg>
          <Svg w={14} h={14} c="none"><path d="M0 0h14v14H0z" fill="#666" /></Svg>
        </StatusCell>
      </StatusBar>

      <Taskbar>
        <Weather>
          <svg width="32" height="30" viewBox="0 0 32 30">
            <defs>
              <linearGradient id="mo" x1=".8" y1="0" x2=".2" y2="1"><stop offset="0" stopColor="#f8c83a" /><stop offset="1" stopColor="#ef7d16" /></linearGradient>
              <linearGradient id="cl" x1="0" y1="0" x2="0" y2="1"><stop offset="0" stopColor="#bcd2f8" /><stop offset="1" stopColor="#86a9ea" /></linearGradient>
            </defs>
            <path d="M19 2c9 3 11.500 13 6 20-5.500 7-17 7-21.500-1C12 22 21 14 19 2z" fill="url(#mo)" />
            <path d="M4.500 12a4 4 0 0 1 0-7.500 5 5 0 0 1 9-.5 4.200 4.200 0 0 1 1 8z" fill="url(#cl)" />
            <path d="M18 27.500a4 4 0 0 1 0-7.500 5 5 0 0 1 8.500-.5A4.200 4.200 0 0 1 28 27.500z" fill="url(#cl)" />
          </svg>
          <div>32°C<small>Partly cloudy</small></div>
        </Weather>
        <Dock>
          {DockIcons.map((ic, i) => <DockItem key={i}>{ic}</DockItem>)}
          <DockItem $on><Tableau size={30} box="#fbfbfb" /><RunMark /></DockItem>
        </Dock>
        <Tray>
          <TrayItem $gap={0}><Svg w={18} h={20} c="#222" sw={1.500}><path d="M2 14l7-8 7 8" /></Svg></TrayItem>
          <TrayItem $gap={11}><Svg w={21} h={16} c="#222" sw={1.200}><path d="M5 14.500a4 4 0 0 1-.5-7.800 6.500 6.500 0 0 1 12-.5 4.200 4.200 0 0 1 .5 8.300z" fill="#f2f2f2" /><path d="M2 12.500L11 7l5-.5-1.500-2.500-4-2-4 1.500L5 6.500l-3 2z" fill="#858585" stroke="none" /></Svg></TrayItem>
          <TrayItem $gap={8}><Svg w={22} h={24} c="#222" sw={1.500}><path d="M3 11a8.500 8.500 0 0 1 16-4M19.500 2v5.500H14M3.500 15.500c1 3 3.500 5 6.500 5.500M2.500 21v-5.500H8" /><circle cx="16" cy="18.500" r="5" fill="#f01010" stroke="none" /></Svg></TrayItem>
          <TrayItem $gap={17}>ENG<br />IN</TrayItem>
          <TrayItem $gap={22}><Svg w={20} h={18} c="#222" sw={1.500}><path d="M1 7a12.500 12.500 0 0 1 18 0M4 10a8.500 8.500 0 0 1 12 0M6.800 13a4.600 4.600 0 0 1 6.400 0" /><circle cx="10" cy="15.500" r="1.300" fill="#222" /></Svg></TrayItem>
          <TrayItem $gap={9}><Svg w={21} h={18} c="#222" sw={1.400}><path d="M1 6.500h3.500L9 2.500v13l-4.500-4H1zM12 6.500c1.200 1.500 1.200 3.500 0 5M14.500 4c2.500 3 2.500 7 0 10M17 2c3.500 4 3.500 10 0 14" /></Svg></TrayItem>
          <TrayItem $gap={8}><Svg w={21} h={18} c="#222" sw={1.500}><path d="M8 4h8a2 2 0 0 1 2 2v7a2 2 0 0 1-2 2H4a2 2 0 0 1-2-2v-3" /><path d="M19.500 7v5" strokeWidth="2.200" /><path d="M5 0L0.500 6.500h2.500L2.500 11l5-6.500H5z" fill="#222" stroke="none" /></Svg></TrayItem>
          <TrayItem $gap={20} $align="right">22:32<br />19-04-2023</TrayItem>
          <Badge>4</Badge>
        </Tray>
      </Taskbar>
    </Screen>
  );
}
